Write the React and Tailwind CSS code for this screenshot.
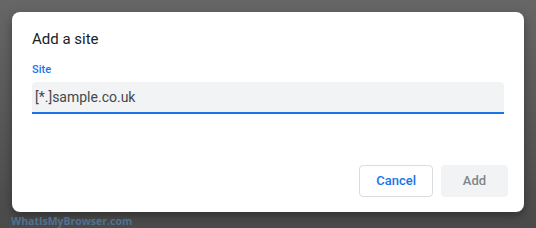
export default function App() {
  return (
    <div
      className="relative w-[536px] h-[228px] overflow-hidden bg-gradient-to-b from-[#666666] to-[#4a4a4a] pt-[12px] pl-[12px]"
      style={{ fontFamily: "Roboto, 'Liberation Sans', sans-serif" }}
    >
      <div className="w-[512px] h-[200px] bg-white rounded-[8px] shadow-[0_4px_10px_rgba(0,0,0,0.35)] flex flex-col px-[20px] pt-[17px] pb-[15px]">
        <h2 className="text-[15px] leading-[20px] text-[#202124] font-normal">Add a site</h2>
        <label className="mt-[14px] text-[11px] leading-[14px] font-medium text-[#1a73e8]">Site</label>
        <div className="mt-[5px] h-[32px] bg-[#f1f3f4] rounded-t-[4px] border-b-2 border-[#1a73e8] flex items-center px-[3px]">
          <span className="text-[14px] text-[#45484c] leading-none">[*.]sample.co.uk</span>
        </div>
        <div className="mt-auto flex justify-end gap-[8px] -mr-[4px]">
          <button className="h-[32px] px-[16px] min-w-[67px] rounded-[4px] border border-[#dadce0] bg-white text-[13px] font-medium text-[#1a73e8]">
            Cancel
          </button>
          <button className="h-[32px] px-[16px] min-w-[67px] rounded-[4px] bg-[#f1f3f4] text-[13px] font-medium text-[#80868b]">
            Add
          </button>
        </div>
      </div>
      <div
        className="absolute left-[11px] top-[215px] text-[10.5px] leading-[12px] font-bold text-[#4d7291]"
        style={{ fontFamily: "'Open Sans', sans-serif" }}
      >
        WhatIsMyBrowser.com
      </div>
    </div>
  );
}
